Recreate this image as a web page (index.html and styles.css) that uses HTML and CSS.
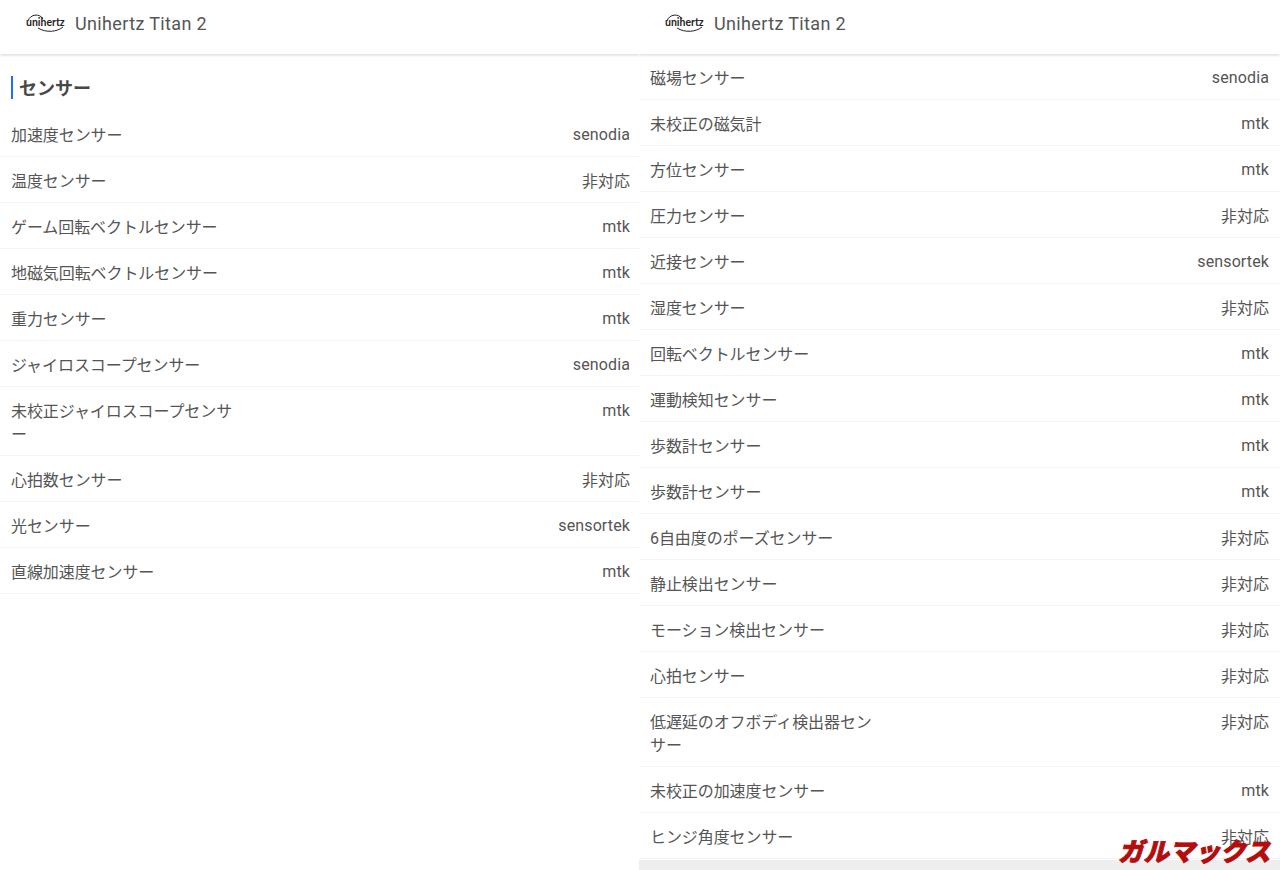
FILE: index.html
```html
<!DOCTYPE html>
<html lang="ja">
<head>
<meta charset="utf-8">
<title>Unihertz Titan 2</title>
<link rel="stylesheet" href="styles.css">
</head>
<body>
<div class="page">
  <section class="panel panel-left">
    <header class="bar">
      <span class="logo"><svg class="logo-arc" viewBox="0 0 40 20" width="40" height="20"><path d="M2 8 C4 1 14 0 17 6" /><path d="M12 15 C20 20 31 19 37 14" /></svg><span class="logo-text">unihertz</span></span>
      <span class="bar-title">Unihertz Titan 2</span>
    </header>
    <h2 class="heading">センサー</h2>
    <ul class="rows">
      <li class="row"><span class="name">加速度センサー</span><span class="value">senodia</span></li>
      <li class="row"><span class="name">温度センサー</span><span class="value value-ja">非対応</span></li>
      <li class="row"><span class="name">ゲーム回転ベクトルセンサー</span><span class="value">mtk</span></li>
      <li class="row"><span class="name">地磁気回転ベクトルセンサー</span><span class="value">mtk</span></li>
      <li class="row"><span class="name">重力センサー</span><span class="value">mtk</span></li>
      <li class="row"><span class="name">ジャイロスコープセンサー</span><span class="value">senodia</span></li>
      <li class="row"><span class="name">未校正ジャイロスコープセンサー</span><span class="value">mtk</span></li>
      <li class="row"><span class="name">心拍数センサー</span><span class="value value-ja">非対応</span></li>
      <li class="row"><span class="name">光センサー</span><span class="value">sensortek</span></li>
      <li class="row"><span class="name">直線加速度センサー</span><span class="value">mtk</span></li>
    </ul>
  </section>
  <section class="panel panel-right">
    <header class="bar">
      <span class="logo"><svg class="logo-arc" viewBox="0 0 40 20" width="40" height="20"><path d="M2 8 C4 1 14 0 17 6" /><path d="M12 15 C20 20 31 19 37 14" /></svg><span class="logo-text">unihertz</span></span>
      <span class="bar-title">Unihertz Titan 2</span>
    </header>
    <ul class="rows">
      <li class="row"><span class="name">磁場センサー</span><span class="value">senodia</span></li>
      <li class="row"><span class="name">未校正の磁気計</span><span class="value">mtk</span></li>
      <li class="row"><span class="name">方位センサー</span><span class="value">mtk</span></li>
      <li class="row"><span class="name">圧力センサー</span><span class="value value-ja">非対応</span></li>
      <li class="row"><span class="name">近接センサー</span><span class="value">sensortek</span></li>
      <li class="row"><span class="name">湿度センサー</span><span class="value value-ja">非対応</span></li>
      <li class="row"><span class="name">回転ベクトルセンサー</span><span class="value">mtk</span></li>
      <li class="row"><span class="name">運動検知センサー</span><span class="value">mtk</span></li>
      <li class="row"><span class="name">歩数計センサー</span><span class="value">mtk</span></li>
      <li class="row"><span class="name">歩数計センサー</span><span class="value">mtk</span></li>
      <li class="row"><span class="name">6自由度のポーズセンサー</span><span class="value value-ja">非対応</span></li>
      <li class="row"><span class="name">静止検出センサー</span><span class="value value-ja">非対応</span></li>
      <li class="row"><span class="name">モーション検出センサー</span><span class="value value-ja">非対応</span></li>
      <li class="row"><span class="name">心拍センサー</span><span class="value value-ja">非対応</span></li>
      <li class="row"><span class="name">低遅延のオフボディ検出器センサー</span><span class="value value-ja">非対応</span></li>
      <li class="row"><span class="name">未校正の加速度センサー</span><span class="value">mtk</span></li>
      <li class="row"><span class="name">ヒンジ角度センサー</span><span class="value value-ja">非対応</span></li>
    </ul>
  </section>
  <div class="watermark">ガルマックス</div>
</div>
</body>
</html>
```
FILE: styles.css
```css
* { box-sizing: border-box; }
html, body { margin: 0; padding: 0; background: #fff; }
.page {
  position: relative;
  display: grid;
  grid-template-columns: 639px 641px;
  height: 870px;
  overflow: hidden;
  font-family: Roboto, "Noto Sans CJK JP", sans-serif;
  color: #555;
}
.panel { display: flex; flex-direction: column; min-width: 0; height: 870px; overflow: hidden; }
.panel-right { background: #eeeeee; }
.panel-left { background: #fff; }
.bar {
  flex: none;
  display: flex;
  align-items: center;
  height: 54px;
  padding: 0 0 6px 26px;
  background: #fff;
  box-shadow: 0 1px 3px rgba(0, 0, 0, 0.18);
  position: relative;
}
.logo {
  position: relative;
  display: block;
  width: 39px;
  height: 20px;
  margin-right: 10px;
  margin-top: -2px;
}
.logo-arc { position: absolute; left: 0; top: 0; fill: none; stroke: #222; stroke-width: 1; }
.logo-text {
  position: absolute;
  left: 0;
  top: 3px;
  font-family: Lato, Roboto, sans-serif;
  font-size: 10.5px;
  line-height: 13px;
  font-weight: 700;
  color: #222;
}
.bar-title { font-size: 18px; letter-spacing: 0.36px; line-height: 24px; color: #555; }
.heading {
  flex: none;
  margin: 22px 0 0 11px;
  height: 23px;
  padding-left: 6px;
  border-left: 2px solid #1f6ff5;
  font-size: 18px;
  line-height: 26px;
  font-weight: 700;
  color: #484848;
}
.rows { list-style: none; margin: 0; padding: 0 0 1px; background: #fff; }
.panel-left .rows { margin-top: 12px; }
.row {
  display: flex;
  justify-content: space-between;
  align-items: flex-start;
  padding: 14px 10px 9px 11px;
  border-bottom: 1px solid #f3f3f3;
  font-size: 16px;
  line-height: 22px;
}
.panel-right .row { padding-right: 11px; }
.name { width: 228px; letter-spacing: -0.08px; line-height: 23px; margin-top: -1px; }
.value { margin-top: -1.4px; letter-spacing: 0.12px; }
.value-ja { margin-top: 0; letter-spacing: 0; }
.panel-left .value { margin-right: -1px; }
.watermark {
  position: absolute;
  left: 1118px;
  bottom: 5px;
  font-size: 25.5px;
  line-height: 25px;
  font-weight: 900;
  font-style: italic;
  color: #b30d0d;
  -webkit-text-stroke: 0.8px #b30d0d;
  white-space: nowrap;
}
```
